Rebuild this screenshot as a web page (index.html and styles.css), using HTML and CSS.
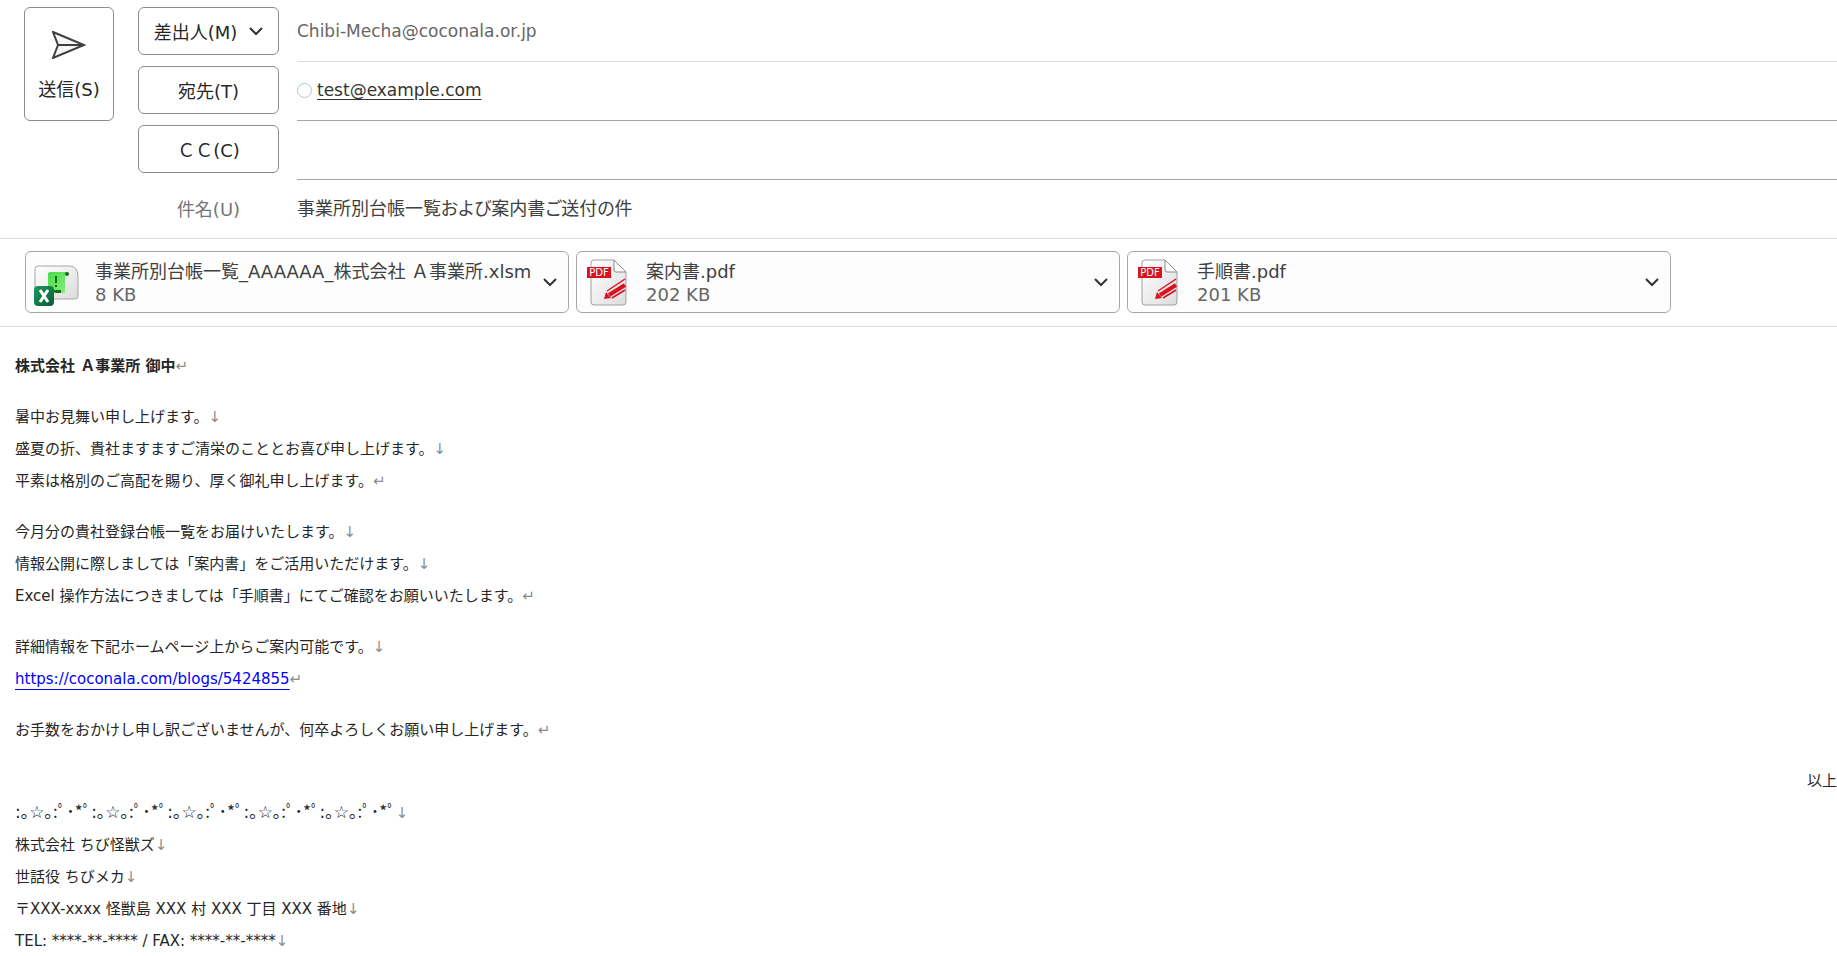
FILE: index.html
```html
<!DOCTYPE html>
<html lang="ja">
  <head>
    <meta charset="UTF-8" />
    <meta name="viewport" content="width=device-width, initial-scale=1.0" />
    <title>事業所別台帳一覧および案内書ご送付の件</title>
    <link rel="stylesheet" href="styles.css">
  </head>
  <body>
    <form class="mail" onsubmit="return false">
      <header class="header">
        <button type="submit" class="btn send">
          <svg class="sendIcon" viewBox="0 0 34 28">
            <path d="M1 1 L32 14 L1 27 L6 14 Z" />
            <path d="M6 14 H31" />
          </svg>
          送信(S)
        </button>
        <div class="fields">
          <button type="button" class="btn">
            差出人(M)
            <svg class="chevron" viewBox="0 0 14 9"><path d="M1 1 L7 7 L13 1" /></svg>
          </button>
          <div class="field from">Chibi-Mecha@coconala.or.jp</div>

          <button type="button" class="btn">宛先(T)</button>
          <div class="field line">
            <span class="presence"></span>
            <a class="address" href="mailto:test@example.com">test@example.com</a>
          </div>

          <button type="button" class="btn">ＣＣ(C)</button>
          <input class="field line" type="text" aria-label="CC" />

          <label class="subjectLabel" for="subject">件名(U)</label>
          <input class="field subject" type="text" id="subject" value="事業所別台帳一覧および案内書ご送付の件" />
        </div>
      </header>

      <section class="attachments">
        <button type="button" class="file">
          <svg class="fileIcon" viewBox="0 0 46 50">
            <defs>
              <linearGradient id="paper" x1="0" y1="0" x2="1" y2="1">
                <stop offset="0" stop-color="#ffffff" />
                <stop offset="1" stop-color="#dcdcdc" />
              </linearGradient>
              <linearGradient id="green" x1="0" y1="0" x2="1" y2="1">
                <stop offset="0" stop-color="#4ad94a" />
                <stop offset="1" stop-color="#8af07a" />
              </linearGradient>
              <linearGradient id="excel" x1="0" y1="0" x2="1" y2="1">
                <stop offset="0" stop-color="#1c9a5c" />
                <stop offset="1" stop-color="#0a5a36" />
              </linearGradient>
            </defs>
            <path d="M5 8 H37 Q45 9 45 18 V38 Q45 41 42 41 H5 Q2 41 2 38 V11 Q2 8 5 8 Z" fill="url(#paper)" stroke="#a6a6a6" />
            <path d="M17 14 H35 Q32 15 32 18 V35 H15 V16 Q15 14 17 14 Z" fill="url(#green)" />
            <path d="M21 32 H28 V35 H23 Q21 35 21 32 Z" fill="#146b1c" />
            <circle cx="34" cy="16" r="2" fill="#146b1c" />
            <path d="M23 18 V25 M23 27 V29" stroke="#146b1c" stroke-width="2" />
            <rect x="1" y="28" width="20" height="20" rx="4" fill="url(#excel)" />
            <path d="M7 32 L15 44 M15 32 L7 44" stroke="#fff" stroke-width="3" />
          </svg>
          <span class="fileText">
            <span class="fileName">事業所別台帳一覧_AAAAAA_株式会社 Ａ事業所.xlsm</span>
            <span class="fileSize">8 KB</span>
          </span>
          <svg class="chevron" viewBox="0 0 14 9"><path d="M1 1 L7 7 L13 1" /></svg>
        </button>

        <button type="button" class="file">
          <svg class="fileIcon" viewBox="0 0 46 50">
            <path d="M10 2 H30 L42 14 V44 Q42 47 39 47 H10 Q7 47 7 44 V5 Q7 2 10 2 Z" fill="url(#paper)" stroke="#a0a0a0" />
            <path d="M30 2 V12 Q30 14 32 14 H42 Z" fill="#fff" stroke="#8a8a8a" />
            <rect x="3" y="9" width="24" height="11" fill="#d8121f" />
            <text class="pdfText" x="15" y="18">PDF</text>
            <path d="M20 41 L22 34 L27 40 Z" fill="#d8121f" />
            <path d="M23 33 L41 21 M28 40 L41 32" stroke="#d8121f" stroke-width="1.5" />
            <path d="M25 37 L41 27" stroke="#d8121f" stroke-width="4" />
          </svg>
          <span class="fileText">
            <span class="fileName">案内書.pdf</span>
            <span class="fileSize">202 KB</span>
          </span>
          <svg class="chevron" viewBox="0 0 14 9"><path d="M1 1 L7 7 L13 1" /></svg>
        </button>

        <button type="button" class="file">
          <svg class="fileIcon" viewBox="0 0 46 50">
            <path d="M10 2 H30 L42 14 V44 Q42 47 39 47 H10 Q7 47 7 44 V5 Q7 2 10 2 Z" fill="url(#paper)" stroke="#a0a0a0" />
            <path d="M30 2 V12 Q30 14 32 14 H42 Z" fill="#fff" stroke="#8a8a8a" />
            <rect x="3" y="9" width="24" height="11" fill="#d8121f" />
            <text class="pdfText" x="15" y="18">PDF</text>
            <path d="M20 41 L22 34 L27 40 Z" fill="#d8121f" />
            <path d="M23 33 L41 21 M28 40 L41 32" stroke="#d8121f" stroke-width="1.5" />
            <path d="M25 37 L41 27" stroke="#d8121f" stroke-width="4" />
          </svg>
          <span class="fileText">
            <span class="fileName">手順書.pdf</span>
            <span class="fileSize">201 KB</span>
          </span>
          <svg class="chevron" viewBox="0 0 14 9"><path d="M1 1 L7 7 L13 1" /></svg>
        </button>
      </section>

      <main class="message">
        <p><b>株式会社 Ａ事業所 御中</b><i class="mark">↵</i></p>
        <p>
          暑中お見舞い申し上げます。<i class="mark">↓</i><br />
          盛夏の折、貴社ますますご清栄のこととお喜び申し上げます。<i class="mark">↓</i><br />
          平素は格別のご高配を賜り、厚く御礼申し上げます。<i class="mark">↵</i>
        </p>
        <p>
          今月分の貴社登録台帳一覧をお届けいたします。<i class="mark">↓</i><br />
          情報公開に際しましては「案内書」をご活用いただけます。<i class="mark">↓</i><br />
          Excel 操作方法につきましては「手順書」にてご確認をお願いいたします。<i class="mark">↵</i>
        </p>
        <p>
          詳細情報を下記ホームページ上からご案内可能です。<i class="mark">↓</i><br />
          <a class="link" href="https://coconala.com/blogs/5424855">https://coconala.com/blogs/5424855</a><i class="mark">↵</i>
        </p>
        <p>お手数をおかけし申し訳ございませんが、何卒よろしくお願い申し上げます。<i class="mark">↵</i></p>
        <p class="closing">以上</p>
        <p class="signature">
          <span class="stars">:｡☆｡:ﾟ･*ﾟ:｡☆｡:ﾟ･*ﾟ:｡☆｡:ﾟ･*ﾟ:｡☆｡:ﾟ･*ﾟ:｡☆｡:ﾟ･*ﾟ</span><i class="mark">↓</i><br />
          株式会社 ちび怪獣ズ<i class="mark">↓</i><br />
          世話役 ちびメカ<i class="mark">↓</i><br />
          〒XXX-xxxx 怪獣島 XXX 村 XXX 丁目 XXX 番地<i class="mark">↓</i><br />
          TEL: ****-**-**** / FAX: ****-**-****<i class="mark">↓</i>
        </p>
      </main>
    </form>
  </body>
</html>
```
FILE: styles.css
```css
* {
  margin: 0px;
  padding: 0px;
  box-sizing: border-box;
}
body {
  background-color: #fff;
  color: #262626;
  font-family: "DejaVu Sans", "Noto Sans CJK JP", sans-serif;
  font-size: 15px;
  overflow-x: hidden;
}
button,
input {
  font: inherit;
  color: inherit;
}
.header {
  display: flex;
  align-items: flex-start;
  gap: 24px;
  padding: 7px 0px 0px 24px;
  border-bottom: 1px solid #dcdcdc;
  font-size: 18px;
}
.btn {
  height: 48px;
  display: flex;
  align-items: center;
  justify-content: center;
  gap: 12px;
  border: 1px solid #8c8c8c;
  border-radius: 6px;
  background-color: #fff;
}
.send {
  width: 90px;
  height: 114px;
  flex-direction: column;
  gap: 16px;
  padding-top: 3px;
}
.sendIcon {
  width: 34px;
  height: 28px;
  fill: #f8f8f8;
  stroke: #404040;
  stroke-width: 2;
}
.chevron {
  width: 14px;
  height: 9px;
  flex-shrink: 0;
  fill: none;
  stroke: #333;
  stroke-width: 2;
}
.fields {
  flex: 1;
  display: grid;
  grid-template-columns: 141px 1fr;
  grid-auto-rows: 48px;
  column-gap: 18px;
  row-gap: 11px;
  padding-bottom: 6px;
}
.field {
  height: 55px;
  display: flex;
  align-items: center;
  padding-bottom: 6px;
  border: none;
  border-bottom: 1px solid #dcdcdc;
  outline: none;
  background: none;
}
.from {
  color: #666;
  font-size: 17px;
}
.line {
  border-bottom-color: #a6a6a6;
}
.presence {
  width: 15px;
  height: 15px;
  margin-right: 5px;
  border: 1px solid #a9c8d4;
  border-radius: 50%;
}
.address {
  color: #333;
  font-size: 17px;
  text-underline-offset: 3px;
}
.subjectLabel {
  display: flex;
  align-items: center;
  justify-content: center;
  color: #767676;
}
.subject {
  height: 48px;
  padding-bottom: 2px;
  border-bottom: none;
  color: #404040;
  font-feature-settings: "palt";
}
.attachments {
  display: flex;
  gap: 7px;
  padding: 12px 166px 13px 25px;
  border-bottom: 1px solid #dcdcdc;
  font-size: 18px;
}
.file {
  flex: 1;
  height: 62px;
  min-width: 0px;
  display: flex;
  align-items: center;
  gap: 16px;
  padding: 1px 11px 0px 7px;
  border: 1px solid #a6a6a6;
  border-radius: 6px;
  background-color: #fdfdfd;
  text-align: left;
}
.fileIcon {
  width: 46px;
  height: 50px;
  flex-shrink: 0;
}
.pdfText {
  fill: #fff;
  font-size: 10px;
  text-anchor: middle;
}
.fileText {
  flex: 1;
  min-width: 0px;
  display: flex;
  flex-direction: column;
  line-height: 23px;
  white-space: nowrap;
}
.fileName {
  color: #404040;
}
.fileSize {
  color: #666;
}
.message {
  padding: 23px 0px 0px 15px;
  line-height: 32px;
}
.message p {
  margin-bottom: 19px;
}
.mark {
  color: #8c8c8c;
  font-size: 15px;
  font-style: normal;
  line-height: 1;
}
.link {
  color: #0000ff;
  text-underline-offset: 5px;
}
.stars {
  font-size: 17px;
  line-height: 1;
}
.message .closing {
  margin-bottom: 0px;
  text-align: right;
}
.message .signature {
  margin-bottom: 0px;
}
```
